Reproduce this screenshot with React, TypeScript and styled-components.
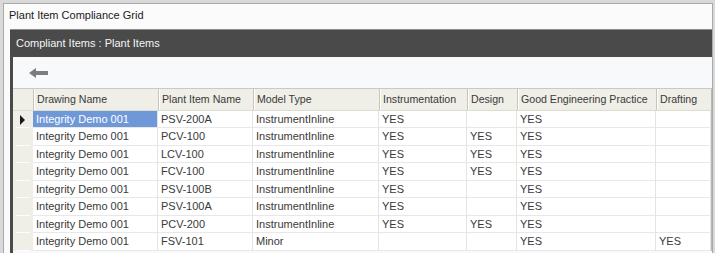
import styled, { createGlobalStyle } from "styled-components"

const GlobalStyle = createGlobalStyle`
    html, body {
        margin: 0;
        padding: 0;
        background: #d9d9d9;
        font-family: "Liberation Sans", Arial, sans-serif;
        font-size: 11px;
        color: #333;
    }
`

const columns = [
    { key: "drawing", label: "Drawing Name", width: 125 },
    { key: "plant", label: "Plant Item Name", width: 95 },
    { key: "model", label: "Model Type", width: 126 },
    { key: "instr", label: "Instrumentation", width: 88 },
    { key: "design", label: "Design", width: 50 },
    { key: "gep", label: "Good Engineering Practice", width: 139 },
    { key: "drafting", label: "Drafting", width: 55 },
]

const rows = [
    ["Integrity Demo 001", "PSV-200A", "InstrumentInline", "YES", "", "YES", ""],
    ["Integrity Demo 001", "PCV-100", "InstrumentInline", "YES", "YES", "YES", ""],
    ["Integrity Demo 001", "LCV-100", "InstrumentInline", "YES", "YES", "YES", ""],
    ["Integrity Demo 001", "FCV-100", "InstrumentInline", "YES", "YES", "YES", ""],
    ["Integrity Demo 001", "PSV-100B", "InstrumentInline", "YES", "", "YES", ""],
    ["Integrity Demo 001", "PSV-100A", "InstrumentInline", "YES", "", "YES", ""],
    ["Integrity Demo 001", "PCV-200", "InstrumentInline", "YES", "YES", "YES", ""],
    ["Integrity Demo 001", "FSV-101", "Minor", "", "", "YES", "YES"],
]

const template = `20px ${columns.map(c => c.width + "px").join(" ")}`

export default function App() {
    return <>
        <GlobalStyle />
        <Window>
            <Panel>
                <Title>Plant Item Compliance Grid</Title>
                <Content>
                    <HeaderBar>Compliant Items : Plant Items</HeaderBar>
                    <Body>
                        <Toolbar>
                            <BackButton>
                                <svg width="19" height="10" viewBox="0 0 19 10">
                                    <path d="M0 5 L7 0 L7 3 L19 3 L19 7 L7 7 L7 10 Z" fill="#7d7d7d" />
                                </svg>
                            </BackButton>
                        </Toolbar>
                        <Grid>
                            <HeaderRow>
                                <Selector $header />
                                {columns.map(c => <HeaderCell key={c.key}>{c.label}</HeaderCell>)}
                            </HeaderRow>
                            {rows.map((r, i) =>
                                <Row key={i}>
                                    <Selector>{i === 0 && <Pointer />}</Selector>
                                    {r.map((v, j) =>
                                        <Cell key={j} $selected={i === 0 && j === 0}>{v}</Cell>
                                    )}
                                </Row>
                            )}
                        </Grid>
                    </Body>
                </Content>
            </Panel>
        </Window>
    </>
}

const Window = styled.div`
    width: 715px;
    height: 253px;
    box-sizing: border-box;
    padding: 3px 2px 0 3px;
    overflow: hidden;
`

const Panel = styled.div`
    height: 100%;
    box-sizing: border-box;
    background: #fbfbfb;
    border-top: 1px solid #a9a9a9;
    border-left: 1px solid #a9a9a9;
    border-right: 1px solid #a9a9a9;
    display: flex;
    flex-direction: column;
`

const Title = styled.div`
    height: 25px;
    line-height: 23px;
    padding-left: 5px;
    font-size: 11px;
    color: #1a1a1a;
`

const Content = styled.div`
    flex-grow: 1;
    margin-left: 6px;
    display: flex;
    flex-direction: column;
`

const HeaderBar = styled.div`
    height: 27px;
    line-height: 27px;
    background: #4a4a4a;
    border-top: 1px solid #8c8c8c;
    color: #f4f4f4;
    font-size: 11px;
    padding-left: 6px;
`

const Body = styled.div`
    flex-grow: 1;
    border-left: 3px solid #4a4a4a;
    background: #f8f9fb;
    display: flex;
    flex-direction: column;
`

const Toolbar = styled.div`
    height: 31px;
    display: flex;
    align-items: center;
    padding-left: 16px;
    border-bottom: 1px solid #c9c9c9;
`

const BackButton = styled.div`
    display: flex;
    margin-top: 1px;
`

const Grid = styled.div`
    display: flex;
    flex-direction: column;
    background: #fff;
    border-right: 1px solid #b8b8b8;
    width: 698px;
`

const HeaderRow = styled.div`
    display: grid;
    grid-template-columns: ${template};
    height: 21px;
    background: #efeee7;
    border-bottom: 1px solid #dddcd2;
`

const HeaderCell = styled.div`
    line-height: 20px;
    padding-left: 3px;
    border-left: 1px solid #c6c5bc;
    box-shadow: inset 1px 0 0 #fff;
    white-space: nowrap;
    overflow: hidden;
    color: #3a3a3a;
    font-size: 10.6px;
`

const Row = styled.div`
    display: grid;
    grid-template-columns: ${template};
    height: 17.45px;
`

const Selector = styled.div<{ $header?: boolean }>`
    background: #efeee7;
    position: relative;
    display: flex;
    align-items: center;
    justify-content: center;
    &::after {
        content: "";
        display: ${p => p.$header ? "none" : "block"};
        position: absolute;
        left: 3px;
        right: 3px;
        bottom: 0;
        height: 1px;
        background: #fdfdfb;
    }
`

const Pointer = styled.span`
    width: 0;
    height: 0;
    border-top: 5px solid transparent;
    border-bottom: 5px solid transparent;
    border-left: 5px solid #1a1a1a;
    margin-left: -2px;
`

const Cell = styled.div<{ $selected?: boolean }>`
    line-height: 17px;
    padding-left: 3px;
    white-space: nowrap;
    overflow: hidden;
    border-bottom: 1px solid #e8e8e8;
    border-right: 1px solid #e3e3e3;
    background: ${p => p.$selected ? "#6f98d8" : "#fff"};
    color: ${p => p.$selected ? "#fff" : "#3a3a3a"};
    font-size: 11px;
`
